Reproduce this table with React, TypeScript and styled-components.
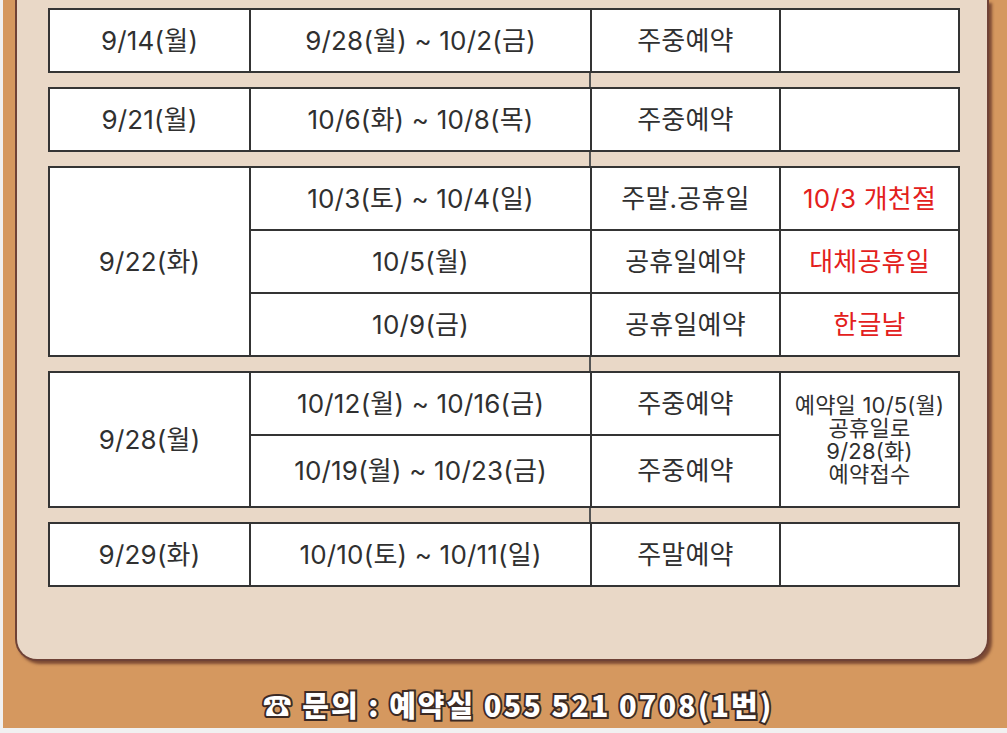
import React from "react";
import styled, { createGlobalStyle } from "styled-components";

const GlobalStyle = createGlobalStyle`
    body {
        margin: 0;
        background: #f1f1f1;
        font-family: Inter, "Noto Sans CJK KR", "Noto Sans", sans-serif;
    }
`;

const StyledPage = styled.div`
    width: 1004px;
    height: 728px;
    margin-left: 3px;
    background: #d5985f;
    display: flex;
    flex-direction: column;
    overflow: hidden;
`;

const StyledPanel = styled.div`
    width: 974px;
    margin-left: 12px;
    padding: 8px 29px 72px 31px;
    box-sizing: border-box;
    background: #e9d8c7;
    border: 2px solid #6f4236;
    border-top: none;
    border-radius: 0 0 22px 22px;
    box-shadow: 3px 3px 3px rgba(95, 50, 38, 0.75);
`;

const StyledStack = styled.div`
    display: flex;
    flex-direction: column;
    gap: 14px;
    background: linear-gradient(#555, #555) no-repeat 541px 0 / 2px 100%;
`;

const StyledTable = styled.table`
    width: 910px;
    border-collapse: collapse;
    table-layout: fixed;
    background: #fff;
`;

const StyledCol = styled.col<{ $w: number }>`
    width: ${props => props.$w}px;
`;

const StyledCell = styled.td<{ $red?: boolean; $note?: boolean; $h?: number }>`
    height: ${props => props.$h ?? 61}px;
    padding: 0;
    border: 2px solid #343434;
    text-align: center;
    vertical-align: middle;
    font-size: ${props => (props.$note ? 22 : 26)}px;
    letter-spacing: 0.2px;
    line-height: ${props => (props.$note ? 23 : 30)}px;
    color: ${props => (props.$red ? "#e3201c" : "#303030")};
`;

const StyledFooter = styled.div`
    flex: 1;
    display: flex;
    justify-content: center;
    align-items: center;
    padding: 18px 0 0 26px;
    font-family: "Noto Sans CJK KR", sans-serif;
    font-size: 29px;
    font-weight: 900;
    letter-spacing: 2px;
    color: #fff;
    -webkit-text-stroke: 4px #3b2a24;
    paint-order: stroke fill;
`;

type Cell = { text: React.ReactNode; rowSpan?: number; red?: boolean; note?: boolean; h?: number };

const columns = [201, 341, 189, 179];

const blocks: Cell[][][] = [
    [[{ text: "9/14(월)" }, { text: "9/28(월) ~ 10/2(금)" }, { text: "주중예약" }, { text: "" }]],
    [[{ text: "9/21(월)" }, { text: "10/6(화) ~ 10/8(목)" }, { text: "주중예약" }, { text: "" }]],
    [
        [
            { text: "9/22(화)", rowSpan: 3 },
            { text: "10/3(토) ~ 10/4(일)" },
            { text: "주말.공휴일" },
            { text: "10/3 개천절", red: true },
        ],
        [{ text: "10/5(월)" }, { text: "공휴일예약" }, { text: "대체공휴일", red: true }],
        [{ text: "10/9(금)" }, { text: "공휴일예약" }, { text: "한글날", red: true }],
    ],
    [
        [
            { text: "9/28(월)", rowSpan: 2 },
            { text: "10/12(월) ~ 10/16(금)" },
            { text: "주중예약" },
            {
                text: (
                    <>
                        예약일 10/5(월)
                        <br />
                        공휴일로
                        <br />
                        9/28(화)
                        <br />
                        예약접수
                    </>
                ),
                rowSpan: 2,
                note: true,
            },
        ],
        [
            { text: "10/19(월) ~ 10/23(금)", h: 70 },
            { text: "주중예약", h: 70 },
        ],
    ],
    [[{ text: "9/29(화)" }, { text: "10/10(토) ~ 10/11(일)" }, { text: "주말예약" }, { text: "" }]],
];

export default function App() {
    return (
        <>
            <GlobalStyle />
            <StyledPage>
                <StyledPanel>
                    <StyledStack>
                        {blocks.map((rows, i) => (
                            <StyledTable key={i}>
                                <colgroup>
                                    {columns.map((w, c) => (
                                        <StyledCol key={c} $w={w} />
                                    ))}
                                </colgroup>
                                <tbody>
                                    {rows.map((row, j) => (
                                        <tr key={j}>
                                            {row.map((cell, k) => (
                                                <StyledCell
                                                    key={k}
                                                    rowSpan={cell.rowSpan}
                                                    $red={cell.red}
                                                    $note={cell.note}
                                                    $h={cell.h}
                                                >
                                                    {cell.text}
                                                </StyledCell>
                                            ))}
                                        </tr>
                                    ))}
                                </tbody>
                            </StyledTable>
                        ))}
                    </StyledStack>
                </StyledPanel>
                <StyledFooter>☎ 문의 : 예약실 055 521 0708(1번)</StyledFooter>
            </StyledPage>
        </>
    );
}
